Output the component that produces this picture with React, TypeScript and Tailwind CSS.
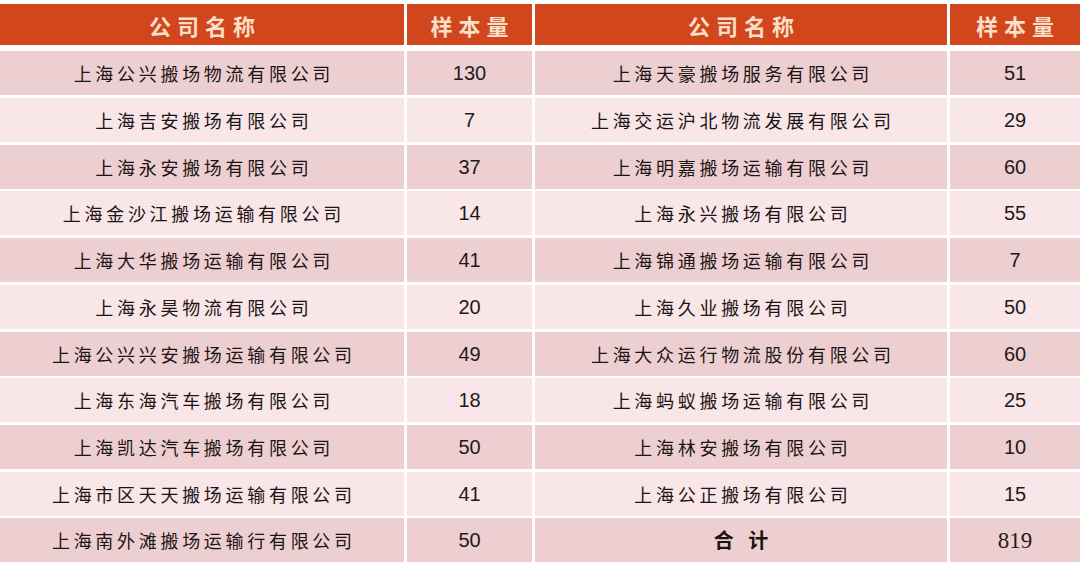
const rows: [string, string, string, string][] = [
  ["上海公兴搬场物流有限公司", "130", "上海天豪搬场服务有限公司", "51"],
  ["上海吉安搬场有限公司", "7", "上海交运沪北物流发展有限公司", "29"],
  ["上海永安搬场有限公司", "37", "上海明嘉搬场运输有限公司", "60"],
  ["上海金沙江搬场运输有限公司", "14", "上海永兴搬场有限公司", "55"],
  ["上海大华搬场运输有限公司", "41", "上海锦通搬场运输有限公司", "7"],
  ["上海永昊物流有限公司", "20", "上海久业搬场有限公司", "50"],
  ["上海公兴兴安搬场运输有限公司", "49", "上海大众运行物流股份有限公司", "60"],
  ["上海东海汽车搬场有限公司", "18", "上海蚂蚁搬场运输有限公司", "25"],
  ["上海凯达汽车搬场有限公司", "50", "上海林安搬场有限公司", "10"],
  ["上海市区天天搬场运输有限公司", "41", "上海公正搬场有限公司", "15"],
  ["上海南外滩搬场运输行有限公司", "50", "", ""],
];

const cjk = "font-['Noto_Sans_CJK_SC',sans-serif]";

function HeaderCell({ label }: { label: string }) {
  return (
    <div className="bg-[#d2461e] flex items-center justify-center h-[41px]">
      <span
        className={`${cjk} text-[22px] font-bold text-[#f8dfc6] tracking-[6px] pl-[6px] leading-none`}
      >
        {label}
      </span>
    </div>
  );
}

function NameCell({ name, bg }: { name: string; bg: string }) {
  return (
    <div className={`${bg} flex items-center justify-center h-[44px]`}>
      <span className={`${cjk} text-[18px] text-[#1c1414] tracking-[3.7px] pl-[3.7px] leading-none`}>
        {name}
      </span>
    </div>
  );
}

function NumCell({ value, bg }: { value: string; bg: string }) {
  return (
    <div className={`${bg} flex items-center justify-center h-[44px]`}>
      <span className="font-['Liberation_Sans',sans-serif] text-[20px] text-[#1f1a1a] leading-none">
        {value}
      </span>
    </div>
  );
}

export default function App() {
  return (
    <div className="w-[1080px] h-[569px] bg-white pt-[4px] overflow-hidden">
      <div className="grid grid-cols-[404px_125px_412px_130px] gap-x-[3px] gap-y-[2.7px]">
        <HeaderCell label="公司名称" />
        <HeaderCell label="样本量" />
        <HeaderCell label="公司名称" />
        <HeaderCell label="样本量" />
        <div className="col-span-4 h-[1px]" />

        {rows.map((r, i) => {
          const bg = i % 2 === 0 ? "bg-[#edcfd2]" : "bg-[#f8e6e8]";
          const last = i === rows.length - 1;
          return (
            <div key={i} className="contents">
              <NameCell name={r[0]} bg={bg} />
              <NumCell value={r[1]} bg={bg} />
              {last ? (
                <>
                  <div className={`${bg} flex items-center justify-center h-[44px]`}>
                    <span className={`${cjk} text-[20px] font-bold text-[#1c1414] tracking-[5px] pl-[5px] leading-none`}>
                      合 计
                    </span>
                  </div>
                  <div className={`${bg} flex items-center justify-center h-[44px]`}>
                    <span className="font-['Liberation_Serif',serif] text-[23px] text-[#2a1816] leading-none">
                      819
                    </span>
                  </div>
                </>
              ) : (
                <>
                  <NameCell name={r[2]} bg={bg} />
                  <NumCell value={r[3]} bg={bg} />
                </>
              )}
            </div>
          );
        })}
      </div>
    </div>
  );
}
